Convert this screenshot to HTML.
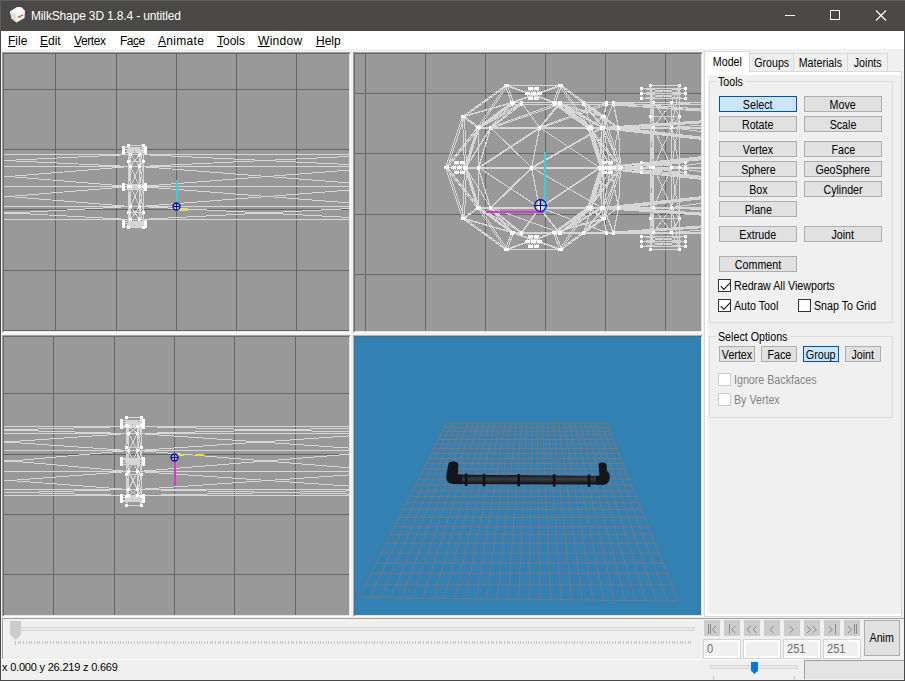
<!DOCTYPE html>
<html lang="en"><head><meta charset="utf-8"><title>MilkShape 3D 1.8.4 - untitled</title>
<style>
html,body{margin:0;padding:0;}
body{width:905px;height:681px;overflow:hidden;background:#f0f0f0;font-family:"Liberation Sans",sans-serif;font-size:11px;color:#000;position:relative;}
#win{position:absolute;left:0;top:0;width:905px;height:681px;background:#f0f0f0;overflow:hidden;}
#win>*, .abs{position:absolute;}
#title{left:0;top:0;width:905px;height:31px;background:#4a4947;}
#title .t{position:absolute;left:31px;top:9px;font-size:12px;letter-spacing:-0.15px;line-height:15px;color:#fff;white-space:nowrap;}
#menu{left:1px;top:31px;width:903px;height:18px;background:#fff;}
#menu span{position:absolute;top:2px;font-size:12px;line-height:16px;white-space:nowrap;}
#menu u{text-decoration:underline;text-underline-offset:1px;text-decoration-thickness:1px;}
.edge{background:#4a4947;}
.vp{box-sizing:border-box;border-top:1px solid #a0a0a0;border-left:1px solid #a0a0a0;border-right:1px solid #fff;border-bottom:1px solid #fff;}
.vpi{border-top:1px solid #696969;border-left:1px solid #696969;border-right:1px solid #e3e3e3;border-bottom:1px solid #e3e3e3;box-sizing:border-box;}
.vps{display:block;}
.b3d{border-top-color:#b0b4b8;border-left-color:#b0b4b8;}
.b3d .vpi{border-top-color:#41708f;border-left-color:#41708f;}
.btn{position:absolute;box-sizing:border-box;border:1px solid #adadad;background:#e1e1e1;text-align:center;font-size:12px;white-space:nowrap;}
.btn.sel{border-color:#005499;background:#cce4f7;}
.btn.prs{border-color:#005499;background:#cce4f7;}
.chk{position:absolute;height:13px;white-space:nowrap;}
.chk .box{position:absolute;left:0;top:0;width:11px;height:11px;border:1px solid #333;background:#fff;}
.chk .cl{position:absolute;left:16px;top:0px;font-size:12px;line-height:14px;}
.chk.dis .box{border-color:#ccc;}
.chk.dis .cl{color:#838383;}
.x{display:inline-block;transform:scaleX(0.89);transform-origin:50% 50%;}
.xl{transform-origin:0 50%;}
.gb{position:absolute;box-sizing:border-box;border:1px solid #dcdcdc;}
.gbl{position:absolute;background:#f0f0f0;font-size:12px;line-height:14px;padding:0 2px;white-space:nowrap;}
.tab{position:absolute;box-sizing:border-box;border:1px solid #d9d9d9;background:#f0f0f0;font-size:12px;text-align:center;white-space:nowrap;}
.tb{position:absolute;width:16px;height:16px;background:#cccccc;}
.tb svg{display:block}
.fld{position:absolute;box-sizing:border-box;width:38px;height:20px;border:1px solid #d2d2d2;background:#f0f0f0;}
.fld span{position:absolute;left:0;top:0;right:0;bottom:0;border:2px solid #fff;font-size:12px;line-height:15px;color:#6d6d6d;padding-left:1px;}
.fld span i{font-style:normal;display:inline-block;transform:scaleX(0.92);transform-origin:0 50%;}
</style></head><body>
<div id="win">
<div id="title"><div class="abs" style="left:0;top:0;width:905px;height:1px;background:#5e5d5b"></div><div class="abs" style="left:0;top:0;width:1px;height:31px;background:#5e5d5b"></div>
<svg class="abs" style="left:9px;top:6px" width="17" height="18" viewBox="0 0 17 18"><path d="M1 5.5 L8.5 1 L12.5 1.5 L16 5 L15.5 12 L7.5 16.5 L2.5 12.5 Z" fill="#f4f4f4"/><path d="M1 5.500 L7 8.500 L7.500 16.500 L2.500 12.500 Z" fill="#dedede"/><path d="M8.500 1 L12.500 1.500 L16 5 L7 8.500 L1 5.500 Z" fill="#fbfbfb"/><path d="M9 11.300 L14 9" stroke="#e03a3a" stroke-width="1.300" fill="none"/></svg>
<div class="t">MilkShape 3D 1.8.4 - untitled</div>
<svg class="abs" style="left:780px;top:5px" width="115" height="22" viewBox="0 0 115 22" ><rect x="5" y="10" width="10" height="1" fill="#fff"/><rect x="50.500" y="5.500" width="9" height="9" fill="none" stroke="#fff" stroke-width="1"/><path d="M96 5.500 L106 15.500 M106 5.500 L96 15.500" stroke="#fff" stroke-width="1.100" fill="none"/></svg>
</div>
<div class="edge" style="left:0;top:31px;width:1px;height:650px"></div>
<div class="edge" style="left:904px;top:31px;width:1px;height:650px"></div>
<div class="edge" style="left:0;top:680px;width:905px;height:1px"></div>
<div id="menu"><span style="left:7px"><u>F</u>ile</span><span style="left:39px"><u>E</u>dit</span><span style="left:73px;letter-spacing:-0.4px"><u>V</u>ertex</span><span style="left:119px;letter-spacing:-0.5px">Fa<u>c</u>e</span><span style="left:157px;letter-spacing:0.3px"><u>A</u>nimate</span><span style="left:216px"><u>T</u>ools</span><span style="left:257px;letter-spacing:0.3px"><u>W</u>indow</span><span style="left:315px"><u>H</u>elp</span></div>
<div class="vp " style="left:2px;top:52px;width:349px;height:281px"><div class="vpi" style="width:347px;height:279px"><svg class="vps" width="345" height="277" viewBox="0 0 345 277" style="background:#999999" shape-rendering="crispEdges"><rect x="51" y="0" width="1" height="277" fill="#666666"/><rect x="112" y="0" width="1" height="277" fill="#666666"/><rect x="172" y="0" width="1" height="277" fill="#666666"/><rect x="232" y="0" width="1" height="277" fill="#666666"/><rect x="292" y="0" width="1" height="277" fill="#666666"/><rect x="0" y="35" width="345" height="1" fill="#666666"/><rect x="0" y="95" width="345" height="1" fill="#666666"/><rect x="0" y="155" width="345" height="1" fill="#666666"/><rect x="0" y="216" width="345" height="1" fill="#666666"/><rect x="0" y="276" width="345" height="1" fill="#666666"/><path d="M-19.5 100.5L126.5 100.5M-19.5 105.5L126.5 112.5M-19.5 107.5L126.5 100.5M-19.5 112.5L126.5 112.5M-19.5 120.5L126.5 132.5M-19.5 124.5L126.5 112.5M-19.5 132.5L126.5 132.5M-19.5 140.5L126.5 152.5M-19.5 144.5L126.5 132.5M-19.5 152.5L126.5 152.5M-19.5 157.5L126.5 165.5M-19.5 160.5L126.5 152.5M-19.5 165.5L126.5 165.5M119.5 93.5L119.5 95.5M119.5 93.5L141.5 93.5M119.5 93.5L141.5 95.5M119.5 95.5L119.5 98.5M119.5 95.5L141.5 93.5M119.5 95.5L141.5 95.5M119.5 95.5L141.5 98.5M119.5 98.5L141.5 95.5M119.5 98.5L141.5 98.5M119.5 130.5L119.5 132.5M119.5 130.5L141.5 130.5M119.5 130.5L141.5 132.5M119.5 132.5L119.5 135.5M119.5 132.5L141.5 130.5M119.5 132.5L141.5 132.5M119.5 132.5L141.5 135.5M119.5 135.5L141.5 132.5M119.5 135.5L141.5 135.5M119.5 167.5L119.5 169.5M119.5 167.5L141.5 167.5M119.5 167.5L141.5 169.5M119.5 169.5L119.5 172.5M119.5 169.5L141.5 167.5M119.5 169.5L141.5 169.5M119.5 169.5L141.5 172.5M119.5 172.5L141.5 169.5M119.5 172.5L141.5 172.5M124.5 91.5L124.5 107.5M124.5 91.5L126.5 100.5M124.5 91.5L126.5 112.5M124.5 91.5L139.5 91.5M124.5 107.5L124.5 132.5M124.5 107.5L126.5 100.5M124.5 107.5L126.5 112.5M124.5 107.5L126.5 132.5M124.5 107.5L139.5 107.5M124.5 132.5L124.5 158.5M124.5 132.5L126.5 112.5M124.5 132.5L126.5 132.5M124.5 132.5L126.5 152.5M124.5 132.5L139.5 132.5M124.5 158.5L124.5 173.5M124.5 158.5L126.5 132.5M124.5 158.5L126.5 152.5M124.5 158.5L126.5 165.5M124.5 158.5L139.5 158.5M124.5 173.5L126.5 152.5M124.5 173.5L126.5 165.5M124.5 173.5L139.5 173.5M126.5 100.5L126.5 112.5M126.5 100.5L135.5 100.5M126.5 100.5L135.5 112.5M126.5 112.5L126.5 132.5M126.5 112.5L135.5 100.5M126.5 112.5L135.5 112.5M126.5 112.5L135.5 132.5M126.5 132.5L126.5 152.5M126.5 132.5L135.5 112.5M126.5 132.5L135.5 132.5M126.5 132.5L135.5 152.5M126.5 152.5L126.5 165.5M126.5 152.5L135.5 132.5M126.5 152.5L135.5 152.5M126.5 152.5L135.5 165.5M126.5 165.5L135.5 152.5M126.5 165.5L135.5 165.5M135.5 100.5L135.5 112.5M135.5 100.5L139.5 91.5M135.5 100.5L139.5 107.5M135.5 100.5L365.5 100.5M135.5 100.5L365.5 111.5M135.5 112.5L135.5 132.5M135.5 112.5L139.5 91.5M135.5 112.5L139.5 107.5M135.5 112.5L139.5 132.5M135.5 112.5L365.5 101.5M135.5 112.5L365.5 112.5M135.5 112.5L365.5 130.5M135.5 132.5L135.5 152.5M135.5 132.5L139.5 107.5M135.5 132.5L139.5 132.5M135.5 132.5L139.5 158.5M135.5 132.5L365.5 114.5M135.5 132.5L365.5 132.5M135.5 132.5L365.5 150.5M135.5 152.5L135.5 165.5M135.5 152.5L139.5 132.5M135.5 152.5L139.5 158.5M135.5 152.5L139.5 173.5M135.5 152.5L365.5 134.5M135.5 152.5L365.5 152.5M135.5 152.5L365.5 164.5M135.5 165.5L139.5 158.5M135.5 165.5L139.5 173.5M135.5 165.5L365.5 153.5M135.5 165.5L365.5 165.5M139.5 91.5L139.5 107.5M139.5 107.5L139.5 132.5M139.5 132.5L139.5 158.5M139.5 158.5L139.5 173.5M141.5 93.5L141.5 95.5M141.5 95.5L141.5 98.5M141.5 130.5L141.5 132.5M141.5 132.5L141.5 135.5M141.5 167.5L141.5 169.5M141.5 169.5L141.5 172.5" fill="none" stroke="#d6d6d6" stroke-width="1" shape-rendering="crispEdges"/><path d="M118 92h3v3h-3zM118 94h3v3h-3zM118 97h3v3h-3zM118 129h3v3h-3zM118 131h3v3h-3zM118 134h3v3h-3zM118 166h3v3h-3zM118 168h3v3h-3zM118 171h3v3h-3zM123 90h3v3h-3zM123 106h3v3h-3zM123 131h3v3h-3zM123 157h3v3h-3zM123 172h3v3h-3zM125 99h3v3h-3zM125 111h3v3h-3zM125 131h3v3h-3zM125 151h3v3h-3zM125 164h3v3h-3zM134 99h3v3h-3zM134 111h3v3h-3zM134 131h3v3h-3zM134 151h3v3h-3zM134 164h3v3h-3zM138 90h3v3h-3zM138 106h3v3h-3zM138 131h3v3h-3zM138 157h3v3h-3zM138 172h3v3h-3zM140 92h3v3h-3zM140 94h3v3h-3zM140 97h3v3h-3zM140 129h3v3h-3zM140 131h3v3h-3zM140 134h3v3h-3zM140 166h3v3h-3zM140 168h3v3h-3zM140 171h3v3h-3z" fill="#ffffff" shape-rendering="crispEdges"/><rect x="172" y="126" width="2" height="30" fill="#35d0d8"/><rect x="174" y="155" width="10" height="2" fill="#e8dc50"/><g shape-rendering="auto"><circle cx="172.5" cy="152.5" r="3.5" fill="rgba(255,255,255,0.3)" stroke="#0a0aa0" stroke-width="1.3"/><path d="M169.0 152.5H176.0M172.5 149.0V156.0" stroke="#0a0aa0" stroke-width="1.1" fill="none"/></g></svg></div></div><div class="vp " style="left:353px;top:52px;width:350px;height:281px"><div class="vpi" style="width:348px;height:279px"><svg class="vps" width="346" height="277" viewBox="0 0 346 277" style="background:#999999" shape-rendering="crispEdges"><rect x="10" y="0" width="1" height="277" fill="#666666"/><rect x="70" y="0" width="1" height="277" fill="#666666"/><rect x="130" y="0" width="1" height="277" fill="#666666"/><rect x="190" y="0" width="1" height="277" fill="#666666"/><rect x="250" y="0" width="1" height="277" fill="#666666"/><rect x="310" y="0" width="1" height="277" fill="#666666"/><rect x="0" y="39" width="346" height="1" fill="#666666"/><rect x="0" y="99" width="346" height="1" fill="#666666"/><rect x="0" y="160" width="346" height="1" fill="#666666"/><rect x="0" y="220" width="346" height="1" fill="#666666"/><path d="M90.5 113.5L107.5 62.5M90.5 113.5L107.5 164.5M90.5 113.5L109.5 113.5M90.5 113.5L122.5 73.5M90.5 113.5L122.5 153.5M92.5 113.5L109.5 62.5M92.5 113.5L109.5 164.5M92.5 113.5L111.5 113.5M92.5 113.5L124.5 73.5M92.5 113.5L124.5 153.5M97.5 113.5L100.5 108.5M97.5 113.5L100.5 118.5M97.5 113.5L103.5 113.5M99.5 113.5L102.5 108.5M99.5 113.5L102.5 118.5M99.5 113.5L105.5 113.5M100.5 108.5L103.5 113.5M100.5 108.5L106.5 108.5M100.5 118.5L103.5 113.5M100.5 118.5L106.5 118.5M102.5 108.5L105.5 113.5M102.5 108.5L108.5 108.5M102.5 118.5L105.5 113.5M102.5 118.5L108.5 118.5M103.5 113.5L106.5 108.5M103.5 113.5L106.5 118.5M103.5 113.5L109.5 113.5M105.5 113.5L108.5 108.5M105.5 113.5L108.5 118.5M105.5 113.5L111.5 113.5M106.5 108.5L109.5 113.5M106.5 118.5L109.5 113.5M107.5 62.5L109.5 113.5M107.5 62.5L122.5 73.5M107.5 62.5L150.5 31.5M107.5 62.5L156.5 48.5M107.5 164.5L109.5 113.5M107.5 164.5L122.5 153.5M107.5 164.5L150.5 195.5M107.5 164.5L156.5 178.5M108.5 108.5L111.5 113.5M108.5 118.5L111.5 113.5M109.5 62.5L111.5 113.5M109.5 62.5L124.5 73.5M109.5 62.5L152.5 31.5M109.5 62.5L158.5 48.5M109.5 113.5L122.5 73.5M109.5 113.5L122.5 153.5M109.5 164.5L111.5 113.5M109.5 164.5L124.5 153.5M109.5 164.5L152.5 195.5M109.5 164.5L158.5 178.5M110.5 113.5L123.5 73.5M110.5 113.5L123.5 113.5M110.5 113.5L123.5 153.5M110.5 113.5L135.5 73.5M110.5 113.5L135.5 153.5M110.5 114.5L123.5 74.5M110.5 114.5L123.5 114.5M110.5 114.5L123.5 154.5M110.5 114.5L135.5 74.5M111.5 113.5L124.5 73.5M111.5 113.5L124.5 153.5M122.5 73.5L150.5 31.5M122.5 73.5L156.5 48.5M122.5 153.5L150.5 195.5M122.5 153.5L156.5 178.5M123.5 73.5L123.5 113.5M123.5 73.5L135.5 73.5M123.5 73.5L157.5 48.5M123.5 73.5L166.5 48.5M123.5 74.5L135.5 74.5M123.5 74.5L157.5 50.5M123.5 74.5L166.5 50.5M123.5 113.5L123.5 153.5M123.5 113.5L135.5 73.5M123.5 113.5L135.5 153.5M123.5 113.5L176.5 113.5M123.5 113.5L184.5 73.5M123.5 113.5L184.5 153.5M123.5 114.5L123.5 154.5M123.5 114.5L135.5 74.5M123.5 114.5L135.5 154.5M123.5 114.5L176.5 114.5M123.5 114.5L184.5 74.5M123.5 153.5L135.5 153.5M123.5 153.5L157.5 178.5M123.5 153.5L166.5 178.5M123.5 154.5L135.5 154.5M123.5 154.5L157.5 179.5M124.5 73.5L152.5 31.5M124.5 73.5L158.5 48.5M124.5 153.5L152.5 195.5M124.5 153.5L158.5 178.5M135.5 73.5L157.5 48.5M135.5 73.5L166.5 48.5M135.5 73.5L176.5 113.5M135.5 73.5L184.5 73.5M135.5 73.5L204.5 48.5M135.5 74.5L166.5 50.5M135.5 74.5L184.5 74.5M135.5 74.5L204.5 50.5M135.5 153.5L157.5 178.5M135.5 153.5L166.5 178.5M135.5 153.5L176.5 113.5M135.5 153.5L184.5 153.5M135.5 153.5L204.5 178.5M135.5 154.5L157.5 179.5M135.5 154.5L166.5 179.5M135.5 154.5L176.5 114.5M135.5 154.5L184.5 154.5M150.5 31.5L156.5 48.5M150.5 31.5L198.5 48.5M150.5 31.5L204.5 31.5M150.5 195.5L156.5 178.5M150.5 195.5L198.5 178.5M150.5 195.5L204.5 195.5M152.5 31.5L158.5 48.5M152.5 31.5L200.5 48.5M152.5 31.5L206.5 31.5M152.5 195.5L158.5 178.5M152.5 195.5L200.5 178.5M152.5 195.5L206.5 195.5M156.5 48.5L198.5 48.5M156.5 48.5L204.5 31.5M156.5 178.5L198.5 178.5M156.5 178.5L204.5 195.5M157.5 48.5L166.5 48.5M157.5 48.5L199.5 48.5M157.5 48.5L205.5 48.5M157.5 50.5L166.5 50.5M157.5 50.5L199.5 50.5M157.5 50.5L205.5 50.5M157.5 178.5L166.5 178.5M157.5 178.5L199.5 178.5M157.5 178.5L205.5 178.5M157.5 179.5L166.5 179.5M157.5 179.5L199.5 179.5M158.5 48.5L200.5 48.5M158.5 48.5L206.5 31.5M158.5 178.5L200.5 178.5M158.5 178.5L206.5 195.5M166.5 48.5L184.5 73.5M166.5 48.5L199.5 48.5M166.5 48.5L204.5 48.5M166.5 48.5L205.5 48.5M166.5 48.5L228.5 48.5M166.5 50.5L204.5 50.5M166.5 50.5L205.5 50.5M166.5 50.5L228.5 50.5M166.5 178.5L184.5 153.5M166.5 178.5L199.5 178.5M166.5 178.5L204.5 178.5M166.5 178.5L205.5 178.5M166.5 178.5L228.5 178.5M166.5 179.5L184.5 154.5M166.5 179.5L199.5 179.5M166.5 179.5L204.5 179.5M166.5 179.5L205.5 179.5M171.5 39.5L174.5 34.5M171.5 39.5L174.5 44.5M171.5 39.5L177.5 39.5M171.5 187.5L174.5 182.5M171.5 187.5L174.5 192.5M171.5 187.5L177.5 187.5M173.5 39.5L176.5 34.5M173.5 39.5L176.5 44.5M173.5 39.5L179.5 39.5M173.5 187.5L176.5 182.5M173.5 187.5L176.5 192.5M173.5 187.5L179.5 187.5M174.5 34.5L177.5 39.5M174.5 34.5L180.5 34.5M174.5 44.5L177.5 39.5M174.5 44.5L180.5 44.5M174.5 182.5L177.5 187.5M174.5 182.5L180.5 182.5M174.5 192.5L177.5 187.5M174.5 192.5L180.5 192.5M176.5 34.5L179.5 39.5M176.5 34.5L182.5 34.5M176.5 44.5L179.5 39.5M176.5 44.5L182.5 44.5M176.5 113.5L184.5 73.5M176.5 113.5L184.5 153.5M176.5 113.5L244.5 113.5M176.5 113.5L246.5 73.5M176.5 113.5L246.5 153.5M176.5 114.5L184.5 74.5M176.5 114.5L184.5 154.5M176.5 114.5L244.5 114.5M176.5 114.5L246.5 74.5M176.5 182.5L179.5 187.5M176.5 182.5L182.5 182.5M176.5 192.5L179.5 187.5M176.5 192.5L182.5 192.5M177.5 39.5L180.5 34.5M177.5 39.5L180.5 44.5M177.5 39.5L183.5 39.5M177.5 187.5L180.5 182.5M177.5 187.5L180.5 192.5M177.5 187.5L183.5 187.5M179.5 39.5L182.5 34.5M179.5 39.5L182.5 44.5M179.5 39.5L185.5 39.5M179.5 187.5L182.5 182.5M179.5 187.5L182.5 192.5M179.5 187.5L185.5 187.5M180.5 34.5L183.5 39.5M180.5 44.5L183.5 39.5M180.5 182.5L183.5 187.5M180.5 192.5L183.5 187.5M182.5 34.5L185.5 39.5M182.5 44.5L185.5 39.5M182.5 182.5L185.5 187.5M182.5 192.5L185.5 187.5M184.5 73.5L204.5 48.5M184.5 73.5L244.5 113.5M184.5 73.5L246.5 73.5M184.5 73.5L251.5 48.5M184.5 74.5L204.5 50.5M184.5 74.5L246.5 74.5M184.5 74.5L251.5 50.5M184.5 153.5L204.5 178.5M184.5 153.5L244.5 113.5M184.5 153.5L246.5 153.5M184.5 153.5L251.5 178.5M184.5 154.5L204.5 179.5M184.5 154.5L244.5 114.5M184.5 154.5L246.5 154.5M198.5 48.5L204.5 31.5M198.5 48.5L232.5 73.5M198.5 48.5L247.5 62.5M198.5 178.5L204.5 195.5M198.5 178.5L232.5 153.5M198.5 178.5L247.5 164.5M199.5 48.5L205.5 48.5M199.5 48.5L233.5 73.5M199.5 48.5L236.5 73.5M199.5 50.5L205.5 50.5M199.5 50.5L233.5 74.5M199.5 50.5L236.5 74.5M199.5 178.5L205.5 178.5M199.5 178.5L233.5 153.5M199.5 178.5L236.5 153.5M199.5 179.5L205.5 179.5M199.5 179.5L233.5 154.5M200.5 48.5L206.5 31.5M200.5 48.5L234.5 73.5M200.5 48.5L249.5 62.5M200.5 178.5L206.5 195.5M200.5 178.5L234.5 153.5M200.5 178.5L249.5 164.5M204.5 31.5L232.5 73.5M204.5 31.5L247.5 62.5M204.5 48.5L205.5 48.5M204.5 48.5L228.5 48.5M204.5 48.5L246.5 73.5M204.5 48.5L251.5 48.5M204.5 48.5L258.5 48.5M204.5 50.5L228.5 50.5M204.5 50.5L251.5 50.5M204.5 50.5L258.5 50.5M204.5 178.5L205.5 178.5M204.5 178.5L228.5 178.5M204.5 178.5L246.5 153.5M204.5 178.5L251.5 178.5M204.5 178.5L258.5 178.5M204.5 179.5L205.5 179.5M204.5 179.5L228.5 179.5M204.5 179.5L246.5 154.5M204.5 179.5L251.5 179.5M204.5 195.5L232.5 153.5M204.5 195.5L247.5 164.5M205.5 48.5L228.5 48.5M205.5 48.5L233.5 73.5M205.5 48.5L236.5 73.5M205.5 48.5L248.5 73.5M205.5 50.5L228.5 50.5M205.5 50.5L236.5 74.5M205.5 50.5L248.5 74.5M205.5 178.5L228.5 178.5M205.5 178.5L233.5 153.5M205.5 178.5L236.5 153.5M205.5 178.5L248.5 153.5M205.5 179.5L228.5 179.5M205.5 179.5L233.5 154.5M205.5 179.5L236.5 154.5M206.5 31.5L234.5 73.5M206.5 31.5L249.5 62.5M206.5 195.5L234.5 153.5M206.5 195.5L249.5 164.5M228.5 48.5L236.5 73.5M228.5 48.5L248.5 73.5M228.5 48.5L251.5 48.5M228.5 48.5L258.5 48.5M228.5 48.5L263.5 73.5M228.5 50.5L248.5 74.5M228.5 50.5L258.5 50.5M228.5 50.5L263.5 74.5M228.5 178.5L236.5 153.5M228.5 178.5L248.5 153.5M228.5 178.5L251.5 178.5M228.5 178.5L258.5 178.5M228.5 178.5L263.5 153.5M228.5 179.5L236.5 154.5M228.5 179.5L248.5 154.5M228.5 179.5L251.5 179.5M228.5 179.5L258.5 179.5M232.5 73.5L245.5 113.5M232.5 73.5L247.5 62.5M232.5 73.5L264.5 113.5M232.5 153.5L245.5 113.5M232.5 153.5L247.5 164.5M232.5 153.5L264.5 113.5M233.5 73.5L236.5 73.5M233.5 73.5L246.5 113.5M233.5 73.5L248.5 113.5M233.5 74.5L236.5 74.5M233.5 74.5L246.5 114.5M233.5 74.5L248.5 114.5M233.5 153.5L236.5 153.5M233.5 153.5L246.5 113.5M233.5 153.5L248.5 113.5M233.5 154.5L236.5 154.5M233.5 154.5L246.5 114.5M234.5 73.5L247.5 113.5M234.5 73.5L249.5 62.5M234.5 73.5L266.5 113.5M234.5 153.5L247.5 113.5M234.5 153.5L249.5 164.5M234.5 153.5L266.5 113.5M236.5 73.5L246.5 113.5M236.5 73.5L248.5 73.5M236.5 73.5L248.5 113.5M236.5 73.5L255.5 113.5M236.5 74.5L248.5 74.5M236.5 74.5L248.5 114.5M236.5 74.5L255.5 114.5M236.5 153.5L246.5 113.5M236.5 153.5L248.5 113.5M236.5 153.5L248.5 153.5M236.5 153.5L255.5 113.5M236.5 154.5L246.5 114.5M236.5 154.5L248.5 114.5M236.5 154.5L248.5 154.5M244.5 113.5L246.5 73.5M244.5 113.5L246.5 153.5M244.5 113.5L298.5 113.5M244.5 113.5L366.5 100.5M244.5 113.5L366.5 113.5M244.5 113.5L366.5 126.5M244.5 114.5L246.5 74.5M244.5 114.5L246.5 154.5M244.5 114.5L366.5 101.5M244.5 114.5L366.5 114.5M244.5 114.5L366.5 127.5M245.5 113.5L247.5 62.5M245.5 113.5L247.5 164.5M245.5 113.5L248.5 108.5M245.5 113.5L248.5 118.5M245.5 113.5L251.5 113.5M245.5 113.5L264.5 113.5M246.5 73.5L251.5 48.5M246.5 73.5L298.5 73.5M246.5 73.5L366.5 65.5M246.5 73.5L366.5 73.5M246.5 73.5L366.5 86.5M246.5 74.5L251.5 50.5M246.5 74.5L366.5 66.5M246.5 74.5L366.5 74.5M246.5 74.5L366.5 87.5M246.5 113.5L248.5 113.5M246.5 114.5L248.5 114.5M246.5 153.5L251.5 178.5M246.5 153.5L298.5 153.5M246.5 153.5L366.5 140.5M246.5 153.5L366.5 153.5M246.5 153.5L366.5 161.5M246.5 154.5L251.5 179.5M246.5 154.5L366.5 141.5M246.5 154.5L366.5 154.5M246.5 154.5L366.5 162.5M247.5 62.5L264.5 113.5M247.5 113.5L249.5 62.5M247.5 113.5L249.5 164.5M247.5 113.5L250.5 108.5M247.5 113.5L250.5 118.5M247.5 113.5L253.5 113.5M247.5 113.5L266.5 113.5M247.5 164.5L264.5 113.5M248.5 73.5L248.5 113.5M248.5 73.5L255.5 113.5M248.5 73.5L258.5 48.5M248.5 73.5L263.5 73.5M248.5 73.5L265.5 113.5M248.5 74.5L255.5 114.5M248.5 74.5L263.5 74.5M248.5 74.5L265.5 114.5M248.5 108.5L251.5 113.5M248.5 108.5L254.5 108.5M248.5 113.5L248.5 153.5M248.5 113.5L255.5 113.5M248.5 114.5L248.5 154.5M248.5 114.5L255.5 114.5M248.5 118.5L251.5 113.5M248.5 118.5L254.5 118.5M248.5 153.5L255.5 113.5M248.5 153.5L258.5 178.5M248.5 153.5L263.5 153.5M248.5 153.5L265.5 113.5M248.5 154.5L255.5 114.5M248.5 154.5L258.5 179.5M248.5 154.5L263.5 154.5M249.5 62.5L266.5 113.5M249.5 164.5L266.5 113.5M250.5 108.5L253.5 113.5M250.5 108.5L256.5 108.5M250.5 118.5L253.5 113.5M250.5 118.5L256.5 118.5M251.5 48.5L258.5 48.5M251.5 48.5L298.5 48.5M251.5 48.5L366.5 48.5M251.5 48.5L366.5 56.5M251.5 50.5L258.5 50.5M251.5 50.5L366.5 50.5M251.5 50.5L366.5 58.5M251.5 113.5L254.5 108.5M251.5 113.5L254.5 118.5M251.5 113.5L257.5 113.5M251.5 178.5L258.5 178.5M251.5 178.5L298.5 178.5M251.5 178.5L366.5 170.5M251.5 178.5L366.5 178.5M251.5 179.5L258.5 179.5M251.5 179.5L366.5 171.5M251.5 179.5L366.5 179.5M253.5 113.5L256.5 108.5M253.5 113.5L256.5 118.5M253.5 113.5L259.5 113.5M254.5 108.5L257.5 113.5M254.5 118.5L257.5 113.5M255.5 113.5L263.5 73.5M255.5 113.5L263.5 153.5M255.5 113.5L265.5 113.5M255.5 114.5L263.5 154.5M255.5 114.5L265.5 114.5M256.5 108.5L259.5 113.5M256.5 118.5L259.5 113.5M258.5 48.5L263.5 73.5M258.5 48.5L298.5 48.5M258.5 48.5L366.5 48.5M258.5 48.5L366.5 56.5M258.5 50.5L263.5 74.5M258.5 50.5L366.5 50.5M258.5 50.5L366.5 57.5M258.5 178.5L263.5 153.5M258.5 178.5L298.5 178.5M258.5 178.5L366.5 170.5M258.5 178.5L366.5 178.5M258.5 179.5L263.5 154.5M258.5 179.5L366.5 172.5M258.5 179.5L366.5 179.5M263.5 73.5L265.5 113.5M263.5 73.5L298.5 73.5M263.5 73.5L366.5 66.5M263.5 73.5L366.5 73.5M263.5 73.5L366.5 85.5M263.5 74.5L265.5 114.5M263.5 74.5L366.5 67.5M263.5 74.5L366.5 74.5M263.5 74.5L366.5 86.5M263.5 153.5L265.5 113.5M263.5 153.5L298.5 153.5M263.5 153.5L366.5 141.5M263.5 153.5L366.5 153.5M263.5 153.5L366.5 160.5M263.5 154.5L265.5 114.5M263.5 154.5L366.5 142.5M263.5 154.5L366.5 154.5M263.5 154.5L366.5 161.5M265.5 113.5L298.5 113.5M265.5 113.5L366.5 102.5M265.5 113.5L366.5 113.5M265.5 113.5L366.5 124.5M265.5 114.5L366.5 103.5M265.5 114.5L366.5 114.5M265.5 114.5L366.5 125.5M286.5 34.5L286.5 39.5M286.5 34.5L330.5 34.5M286.5 34.5L330.5 39.5M286.5 39.5L286.5 44.5M286.5 39.5L330.5 34.5M286.5 39.5L330.5 39.5M286.5 39.5L330.5 44.5M286.5 44.5L330.5 39.5M286.5 44.5L330.5 44.5M286.5 108.5L286.5 113.5M286.5 108.5L330.5 108.5M286.5 108.5L330.5 113.5M286.5 113.5L286.5 118.5M286.5 113.5L330.5 108.5M286.5 113.5L330.5 113.5M286.5 113.5L330.5 118.5M286.5 118.5L330.5 113.5M286.5 118.5L330.5 118.5M286.5 182.5L286.5 187.5M286.5 182.5L330.5 182.5M286.5 182.5L330.5 187.5M286.5 187.5L286.5 192.5M286.5 187.5L330.5 182.5M286.5 187.5L330.5 187.5M286.5 187.5L330.5 192.5M286.5 192.5L330.5 187.5M286.5 192.5L330.5 192.5M295.5 31.5L295.5 62.5M295.5 31.5L298.5 48.5M295.5 31.5L298.5 73.5M295.5 31.5L324.5 31.5M295.5 62.5L295.5 113.5M295.5 62.5L298.5 48.5M295.5 62.5L298.5 73.5M295.5 62.5L298.5 113.5M295.5 62.5L324.5 62.5M295.5 113.5L295.5 164.5M295.5 113.5L298.5 73.5M295.5 113.5L298.5 113.5M295.5 113.5L298.5 153.5M295.5 113.5L324.5 113.5M295.5 164.5L295.5 195.5M295.5 164.5L298.5 113.5M295.5 164.5L298.5 153.5M295.5 164.5L298.5 178.5M295.5 164.5L324.5 164.5M295.5 195.5L298.5 153.5M295.5 195.5L298.5 178.5M295.5 195.5L324.5 195.5M298.5 48.5L298.5 73.5M298.5 48.5L316.5 48.5M298.5 48.5L316.5 73.5M298.5 73.5L298.5 113.5M298.5 73.5L316.5 48.5M298.5 73.5L316.5 73.5M298.5 73.5L316.5 113.5M298.5 113.5L298.5 153.5M298.5 113.5L316.5 73.5M298.5 113.5L316.5 113.5M298.5 113.5L316.5 153.5M298.5 153.5L298.5 178.5M298.5 153.5L316.5 113.5M298.5 153.5L316.5 153.5M298.5 153.5L316.5 178.5M298.5 178.5L316.5 153.5M298.5 178.5L316.5 178.5M316.5 48.5L316.5 73.5M316.5 48.5L324.5 31.5M316.5 48.5L324.5 62.5M316.5 48.5L366.5 48.5M316.5 48.5L366.5 52.5M316.5 73.5L316.5 113.5M316.5 73.5L324.5 31.5M316.5 73.5L324.5 62.5M316.5 73.5L324.5 113.5M316.5 73.5L366.5 69.5M316.5 73.5L366.5 73.5M316.5 73.5L366.5 80.5M316.5 113.5L316.5 153.5M316.5 113.5L324.5 62.5M316.5 113.5L324.5 113.5M316.5 113.5L324.5 164.5M316.5 113.5L366.5 106.5M316.5 113.5L366.5 113.5M316.5 113.5L366.5 120.5M316.5 153.5L316.5 178.5M316.5 153.5L324.5 113.5M316.5 153.5L324.5 164.5M316.5 153.5L324.5 195.5M316.5 153.5L366.5 146.5M316.5 153.5L366.5 153.5M316.5 153.5L366.5 157.5M316.5 178.5L324.5 164.5M316.5 178.5L324.5 195.5M316.5 178.5L366.5 174.5M316.5 178.5L366.5 178.5M324.5 31.5L324.5 62.5M324.5 62.5L324.5 113.5M324.5 113.5L324.5 164.5M324.5 164.5L324.5 195.5M330.5 34.5L330.5 39.5M330.5 39.5L330.5 44.5M330.5 108.5L330.5 113.5M330.5 113.5L330.5 118.5M330.5 182.5L330.5 187.5M330.5 187.5L330.5 192.5" fill="none" stroke="#d6d6d6" stroke-width="1" shape-rendering="crispEdges"/><path d="M89 112h3v3h-3zM91 112h3v3h-3zM96 112h3v3h-3zM98 112h3v3h-3zM99 107h3v3h-3zM99 117h3v3h-3zM101 107h3v3h-3zM101 117h3v3h-3zM102 112h3v3h-3zM104 112h3v3h-3zM105 107h3v3h-3zM105 117h3v3h-3zM106 61h3v3h-3zM106 163h3v3h-3zM107 107h3v3h-3zM107 117h3v3h-3zM108 61h3v3h-3zM108 112h3v3h-3zM108 163h3v3h-3zM109 112h3v3h-3zM109 113h3v3h-3zM110 112h3v3h-3zM121 72h3v3h-3zM121 152h3v3h-3zM122 72h3v3h-3zM122 73h3v3h-3zM122 112h3v3h-3zM122 113h3v3h-3zM122 152h3v3h-3zM122 153h3v3h-3zM123 72h3v3h-3zM123 152h3v3h-3zM134 72h3v3h-3zM134 73h3v3h-3zM134 152h3v3h-3zM134 153h3v3h-3zM149 30h3v3h-3zM149 194h3v3h-3zM151 30h3v3h-3zM151 194h3v3h-3zM155 47h3v3h-3zM155 177h3v3h-3zM156 47h3v3h-3zM156 49h3v3h-3zM156 177h3v3h-3zM156 178h3v3h-3zM157 47h3v3h-3zM157 177h3v3h-3zM165 47h3v3h-3zM165 49h3v3h-3zM165 177h3v3h-3zM165 178h3v3h-3zM170 38h3v3h-3zM170 186h3v3h-3zM172 38h3v3h-3zM172 186h3v3h-3zM173 33h3v3h-3zM173 43h3v3h-3zM173 181h3v3h-3zM173 191h3v3h-3zM175 33h3v3h-3zM175 43h3v3h-3zM175 112h3v3h-3zM175 113h3v3h-3zM175 181h3v3h-3zM175 191h3v3h-3zM176 38h3v3h-3zM176 186h3v3h-3zM178 38h3v3h-3zM178 186h3v3h-3zM179 33h3v3h-3zM179 43h3v3h-3zM179 181h3v3h-3zM179 191h3v3h-3zM181 33h3v3h-3zM181 43h3v3h-3zM181 181h3v3h-3zM181 191h3v3h-3zM182 38h3v3h-3zM182 186h3v3h-3zM183 72h3v3h-3zM183 73h3v3h-3zM183 152h3v3h-3zM183 153h3v3h-3zM184 38h3v3h-3zM184 186h3v3h-3zM197 47h3v3h-3zM197 177h3v3h-3zM198 47h3v3h-3zM198 49h3v3h-3zM198 177h3v3h-3zM198 178h3v3h-3zM199 47h3v3h-3zM199 177h3v3h-3zM203 30h3v3h-3zM203 47h3v3h-3zM203 49h3v3h-3zM203 177h3v3h-3zM203 178h3v3h-3zM203 194h3v3h-3zM204 47h3v3h-3zM204 49h3v3h-3zM204 177h3v3h-3zM204 178h3v3h-3zM205 30h3v3h-3zM205 194h3v3h-3zM227 47h3v3h-3zM227 49h3v3h-3zM227 177h3v3h-3zM227 178h3v3h-3zM231 72h3v3h-3zM231 152h3v3h-3zM232 72h3v3h-3zM232 73h3v3h-3zM232 152h3v3h-3zM232 153h3v3h-3zM233 72h3v3h-3zM233 152h3v3h-3zM235 72h3v3h-3zM235 73h3v3h-3zM235 152h3v3h-3zM235 153h3v3h-3zM243 112h3v3h-3zM243 113h3v3h-3zM244 112h3v3h-3zM245 72h3v3h-3zM245 73h3v3h-3zM245 112h3v3h-3zM245 113h3v3h-3zM245 152h3v3h-3zM245 153h3v3h-3zM246 61h3v3h-3zM246 112h3v3h-3zM246 163h3v3h-3zM247 72h3v3h-3zM247 73h3v3h-3zM247 107h3v3h-3zM247 112h3v3h-3zM247 113h3v3h-3zM247 117h3v3h-3zM247 152h3v3h-3zM247 153h3v3h-3zM248 61h3v3h-3zM248 163h3v3h-3zM249 107h3v3h-3zM249 117h3v3h-3zM250 47h3v3h-3zM250 49h3v3h-3zM250 112h3v3h-3zM250 177h3v3h-3zM250 178h3v3h-3zM252 112h3v3h-3zM253 107h3v3h-3zM253 117h3v3h-3zM254 112h3v3h-3zM254 113h3v3h-3zM255 107h3v3h-3zM255 117h3v3h-3zM256 112h3v3h-3zM257 47h3v3h-3zM257 49h3v3h-3zM257 177h3v3h-3zM257 178h3v3h-3zM258 112h3v3h-3zM262 72h3v3h-3zM262 73h3v3h-3zM262 152h3v3h-3zM262 153h3v3h-3zM263 112h3v3h-3zM264 112h3v3h-3zM264 113h3v3h-3zM265 112h3v3h-3zM285 33h3v3h-3zM285 38h3v3h-3zM285 43h3v3h-3zM285 107h3v3h-3zM285 112h3v3h-3zM285 117h3v3h-3zM285 181h3v3h-3zM285 186h3v3h-3zM285 191h3v3h-3zM294 30h3v3h-3zM294 61h3v3h-3zM294 112h3v3h-3zM294 163h3v3h-3zM294 194h3v3h-3zM297 47h3v3h-3zM297 72h3v3h-3zM297 112h3v3h-3zM297 152h3v3h-3zM297 177h3v3h-3zM315 47h3v3h-3zM315 72h3v3h-3zM315 112h3v3h-3zM315 152h3v3h-3zM315 177h3v3h-3zM323 30h3v3h-3zM323 61h3v3h-3zM323 112h3v3h-3zM323 163h3v3h-3zM323 194h3v3h-3zM329 33h3v3h-3zM329 38h3v3h-3zM329 43h3v3h-3zM329 107h3v3h-3zM329 112h3v3h-3zM329 117h3v3h-3zM329 181h3v3h-3zM329 186h3v3h-3zM329 191h3v3h-3z" fill="#ffffff" shape-rendering="crispEdges"/><rect x="189" y="98" width="2" height="61" fill="#35d0d8"/><rect x="131" y="157" width="58" height="2" fill="#d838d0"/><g shape-rendering="auto"><circle cx="185.5" cy="151.5" r="5.8" fill="rgba(255,255,255,0.3)" stroke="#0a0aa0" stroke-width="1.3"/><path d="M179.7 151.5H191.3M185.5 145.7V157.3" stroke="#0a0aa0" stroke-width="1.1" fill="none"/></g></svg></div></div><div class="vp " style="left:2px;top:335px;width:349px;height:282px"><div class="vpi" style="width:347px;height:280px"><svg class="vps" width="345" height="278" viewBox="0 0 345 278" style="background:#999999" shape-rendering="crispEdges"><rect x="49" y="0" width="1" height="278" fill="#666666"/><rect x="110" y="0" width="1" height="278" fill="#666666"/><rect x="170" y="0" width="1" height="278" fill="#666666"/><rect x="230" y="0" width="1" height="278" fill="#666666"/><rect x="291" y="0" width="1" height="278" fill="#666666"/><rect x="0" y="56" width="345" height="1" fill="#666666"/><rect x="0" y="117" width="345" height="1" fill="#666666"/><rect x="0" y="177" width="345" height="1" fill="#666666"/><rect x="0" y="237" width="345" height="1" fill="#666666"/><path d="M-19.5 89.5L124.5 89.5M-19.5 92.5L124.5 96.5M-19.5 93.5L124.5 89.5M-19.5 96.5L124.5 96.5M-19.5 103.5L124.5 113.5M-19.5 106.5L124.5 96.5M-19.5 113.5L124.5 113.5M-19.5 121.5L124.5 134.5M-19.5 126.5L124.5 113.5M-19.5 134.5L124.5 134.5M-19.5 141.5L124.5 152.5M-19.5 145.5L124.5 134.5M-19.5 152.5L124.5 152.5M-19.5 154.5L124.5 158.5M-19.5 156.5L124.5 152.5M-19.5 158.5L124.5 158.5M117.5 83.5L117.5 85.5M117.5 83.5L117.5 86.5M117.5 83.5L139.5 83.5M117.5 83.5L139.5 85.5M117.5 85.5L117.5 86.5M117.5 85.5L117.5 88.5M117.5 85.5L139.5 83.5M117.5 85.5L139.5 85.5M117.5 85.5L139.5 88.5M117.5 86.5L117.5 88.5M117.5 86.5L117.5 90.5M117.5 88.5L117.5 90.5M117.5 88.5L139.5 85.5M117.5 88.5L139.5 88.5M117.5 88.5L139.5 90.5M117.5 90.5L139.5 88.5M117.5 90.5L139.5 90.5M117.5 121.5L117.5 122.5M117.5 121.5L117.5 124.5M117.5 121.5L139.5 121.5M117.5 121.5L139.5 122.5M117.5 122.5L117.5 124.5M117.5 122.5L117.5 125.5M117.5 122.5L139.5 121.5M117.5 122.5L139.5 122.5M117.5 122.5L139.5 125.5M117.5 124.5L117.5 125.5M117.5 124.5L117.5 127.5M117.5 125.5L117.5 127.5M117.5 125.5L139.5 122.5M117.5 125.5L139.5 125.5M117.5 125.5L139.5 127.5M117.5 127.5L139.5 125.5M117.5 127.5L139.5 127.5M117.5 158.5L117.5 160.5M117.5 158.5L117.5 161.5M117.5 158.5L139.5 158.5M117.5 158.5L139.5 160.5M117.5 160.5L117.5 161.5M117.5 160.5L117.5 163.5M117.5 160.5L139.5 158.5M117.5 160.5L139.5 160.5M117.5 160.5L139.5 163.5M117.5 161.5L117.5 163.5M117.5 161.5L117.5 164.5M117.5 163.5L117.5 164.5M117.5 163.5L139.5 160.5M117.5 163.5L139.5 163.5M117.5 163.5L139.5 164.5M117.5 164.5L139.5 163.5M117.5 164.5L139.5 164.5M122.5 80.5L122.5 88.5M122.5 80.5L124.5 89.5M122.5 80.5L124.5 96.5M122.5 80.5L137.5 80.5M122.5 88.5L122.5 110.5M122.5 88.5L124.5 89.5M122.5 88.5L124.5 96.5M122.5 88.5L124.5 113.5M122.5 88.5L137.5 88.5M122.5 110.5L122.5 137.5M122.5 110.5L124.5 96.5M122.5 110.5L124.5 113.5M122.5 110.5L124.5 134.5M122.5 110.5L137.5 110.5M122.5 137.5L122.5 159.5M122.5 137.5L124.5 113.5M122.5 137.5L124.5 134.5M122.5 137.5L124.5 152.5M122.5 137.5L137.5 137.5M122.5 159.5L122.5 168.5M122.5 159.5L124.5 134.5M122.5 159.5L124.5 152.5M122.5 159.5L124.5 158.5M122.5 159.5L137.5 159.5M122.5 168.5L124.5 152.5M122.5 168.5L124.5 158.5M122.5 168.5L137.5 168.5M124.5 89.5L124.5 96.5M124.5 89.5L133.5 89.5M124.5 89.5L133.5 96.5M124.5 96.5L124.5 113.5M124.5 96.5L133.5 89.5M124.5 96.5L133.5 96.5M124.5 96.5L133.5 113.5M124.5 113.5L124.5 134.5M124.5 113.5L133.5 96.5M124.5 113.5L133.5 113.5M124.5 113.5L133.5 134.5M124.5 134.5L124.5 152.5M124.5 134.5L133.5 113.5M124.5 134.5L133.5 134.5M124.5 134.5L133.5 152.5M124.5 152.5L124.5 158.5M124.5 152.5L133.5 134.5M124.5 152.5L133.5 152.5M124.5 152.5L133.5 158.5M124.5 158.5L133.5 152.5M124.5 158.5L133.5 158.5M133.5 89.5L133.5 96.5M133.5 89.5L137.5 80.5M133.5 89.5L137.5 88.5M133.5 89.5L365.5 89.5M133.5 89.5L365.5 95.5M133.5 96.5L133.5 113.5M133.5 96.5L137.5 80.5M133.5 96.5L137.5 88.5M133.5 96.5L137.5 110.5M133.5 96.5L365.5 90.5M133.5 96.5L365.5 96.5M133.5 96.5L365.5 112.5M133.5 113.5L133.5 134.5M133.5 113.5L137.5 88.5M133.5 113.5L137.5 110.5M133.5 113.5L137.5 137.5M133.5 113.5L365.5 97.5M133.5 113.5L365.5 113.5M133.5 113.5L365.5 132.5M133.5 134.5L133.5 152.5M133.5 134.5L137.5 110.5M133.5 134.5L137.5 137.5M133.5 134.5L137.5 159.5M133.5 134.5L365.5 115.5M133.5 134.5L365.5 134.5M133.5 134.5L365.5 150.5M133.5 152.5L133.5 158.5M133.5 152.5L137.5 137.5M133.5 152.5L137.5 159.5M133.5 152.5L137.5 168.5M133.5 152.5L365.5 136.5M133.5 152.5L365.5 152.5M133.5 152.5L365.5 157.5M133.5 158.5L137.5 159.5M133.5 158.5L137.5 168.5M133.5 158.5L365.5 153.5M133.5 158.5L365.5 158.5M137.5 80.5L137.5 88.5M137.5 88.5L137.5 110.5M137.5 110.5L137.5 137.5M137.5 137.5L137.5 159.5M137.5 159.5L137.5 168.5M139.5 83.5L139.5 85.5M139.5 83.5L139.5 86.5M139.5 85.5L139.5 86.5M139.5 85.5L139.5 88.5M139.5 86.5L139.5 88.5M139.5 86.5L139.5 90.5M139.5 88.5L139.5 90.5M139.5 121.5L139.5 122.5M139.5 121.5L139.5 124.5M139.5 122.5L139.5 124.5M139.5 122.5L139.5 125.5M139.5 124.5L139.5 125.5M139.5 124.5L139.5 127.5M139.5 125.5L139.5 127.5M139.5 158.5L139.5 160.5M139.5 158.5L139.5 161.5M139.5 160.5L139.5 161.5M139.5 160.5L139.5 163.5M139.5 161.5L139.5 163.5M139.5 161.5L139.5 164.5M139.5 163.5L139.5 164.5" fill="none" stroke="#d6d6d6" stroke-width="1" shape-rendering="crispEdges"/><path d="M116 82h3v3h-3zM116 84h3v3h-3zM116 85h3v3h-3zM116 87h3v3h-3zM116 89h3v3h-3zM116 120h3v3h-3zM116 121h3v3h-3zM116 123h3v3h-3zM116 124h3v3h-3zM116 126h3v3h-3zM116 157h3v3h-3zM116 159h3v3h-3zM116 160h3v3h-3zM116 162h3v3h-3zM116 163h3v3h-3zM121 79h3v3h-3zM121 87h3v3h-3zM121 109h3v3h-3zM121 136h3v3h-3zM121 158h3v3h-3zM121 167h3v3h-3zM123 88h3v3h-3zM123 95h3v3h-3zM123 112h3v3h-3zM123 133h3v3h-3zM123 151h3v3h-3zM123 157h3v3h-3zM132 88h3v3h-3zM132 95h3v3h-3zM132 112h3v3h-3zM132 133h3v3h-3zM132 151h3v3h-3zM132 157h3v3h-3zM136 79h3v3h-3zM136 87h3v3h-3zM136 109h3v3h-3zM136 136h3v3h-3zM136 158h3v3h-3zM136 167h3v3h-3zM138 82h3v3h-3zM138 84h3v3h-3zM138 85h3v3h-3zM138 87h3v3h-3zM138 89h3v3h-3zM138 120h3v3h-3zM138 121h3v3h-3zM138 123h3v3h-3zM138 124h3v3h-3zM138 126h3v3h-3zM138 157h3v3h-3zM138 159h3v3h-3zM138 160h3v3h-3zM138 162h3v3h-3zM138 163h3v3h-3z" fill="#ffffff" shape-rendering="crispEdges"/><rect x="170" y="123" width="2" height="26" fill="#d838d0"/><rect x="173" y="117" width="7" height="2" fill="#e8dc50"/><rect x="191" y="117" width="9" height="2" fill="#e8dc50"/><g shape-rendering="auto"><circle cx="170.5" cy="120.5" r="3.5" fill="rgba(255,255,255,0.3)" stroke="#0a0aa0" stroke-width="1.3"/><path d="M167.0 120.5H174.0M170.5 117.0V124.0" stroke="#0a0aa0" stroke-width="1.1" fill="none"/></g></svg></div></div><div class="vp b3d" style="left:353px;top:335px;width:350px;height:282px"><div class="vpi" style="width:348px;height:280px"><svg class="vps" width="346" height="278" viewBox="0 0 346 278" style="background:#3380b3" shape-rendering="crispEdges"><path d="M91.3 86.0L251.9 86.0M89.2 90.3L253.7 90.3M87.2 94.3L255.3 94.3M85.2 98.2L256.9 98.2M83.0 102.6L258.7 102.6M80.8 107.1L260.5 107.1M78.4 111.8L262.4 111.8M76.1 116.5L264.3 116.5M73.6 121.5L266.4 121.5M71.1 126.4L268.4 126.4M68.7 131.4L270.4 131.4M66.0 136.7L272.5 136.7M63.4 142.0L274.7 142.0M60.5 147.7L277.0 147.7M57.5 153.7L279.5 153.7M54.6 159.5L281.8 159.5M51.4 165.9L284.4 165.9M48.1 172.6L287.2 172.6M44.1 180.6L290.4 180.6M39.7 189.4L294.0 189.4M35.8 197.3L297.2 197.3M31.3 206.2L300.8 206.2M26.3 216.2L304.9 216.2M21.4 226.1L309.0 226.1M16.1 236.7L313.3 236.7M10.5 248.0L317.9 248.0M4.2 260.5L323.0 264.0M91.5 86.0L4.2 260.5M96.8 86.0L14.9 260.6M102.2 86.0L25.5 260.7M107.5 86.0L36.1 260.9M112.9 86.0L46.7 261.0M118.2 86.0L57.4 261.1M123.5 86.0L68.0 261.2M128.9 86.0L78.6 261.3M134.2 86.0L89.2 261.4M139.6 86.0L99.9 261.6M144.9 86.0L110.5 261.7M150.2 86.0L121.1 261.8M155.6 86.0L131.7 261.9M160.9 86.0L142.4 262.0M166.3 86.0L153.0 262.1M171.6 86.0L163.6 262.2M176.9 86.0L174.2 262.4M182.3 86.0L184.8 262.5M187.6 86.0L195.5 262.6M193.0 86.0L206.1 262.7M198.3 86.0L216.7 262.8M203.6 86.0L227.3 262.9M209.0 86.0L238.0 263.1M214.3 86.0L248.6 263.2M219.7 86.0L259.2 263.3M225.0 86.0L269.8 263.4M230.3 86.0L280.5 263.5M235.7 86.0L291.1 263.6M241.0 86.0L301.7 263.8M246.4 86.0L312.3 263.9M251.7 86.0L323.0 264.0" fill="none" stroke="#84767a" stroke-width="1" shape-rendering="auto" opacity="0.8"/><defs><linearGradient id="pg" x1="0" y1="0" x2="0" y2="1"><stop offset="0" stop-color="#0e1014"/><stop offset="0.45" stop-color="#3a3e45"/><stop offset="1" stop-color="#0b0c10"/></linearGradient></defs><g shape-rendering="auto"><path d="M97 137.60000000000002 L249 139 L249 147.60000000000002 L97 147 Z" fill="url(#pg)"/><path d="M93.5 126.5 Q94 124.30000000000001 98.5 124.5 Q103.60000000000002 124.80000000000001 103.39999999999998 128 L102.80000000000001 137.60000000000002 L107 137.8 L107 147.2 L98 147 Q90.60000000000002 146 91.19999999999999 139 Z" fill="#14161b"/><path d="M243.60000000000002 128 Q243.39999999999998 125.39999999999998 247.5 125.5 Q251.79999999999995 125.80000000000001 251.60000000000002 129 L252 134 Q255.39999999999998 136 254.79999999999995 141 Q254 148.2 247 147.8 L241 147.60000000000002 L241 139 L244.39999999999998 138.39999999999998 Z" fill="#14161b"/><rect x="109.8" y="136.5" width="2.6" height="12.4" fill="#101216"/><rect x="127.7" y="136.7" width="2.6" height="12.4" fill="#101216"/><rect x="162.4" y="136.9" width="2.6" height="12.4" fill="#101216"/><rect x="197.8" y="137.2" width="2.6" height="12.4" fill="#101216"/><rect x="232.7" y="137.5" width="2.6" height="12.4" fill="#101216"/><rect x="168.5" y="143" width="2" height="1.5" fill="#2018a0"/></g></svg></div></div>
<!-- right panel -->
<div class="abs" style="left:704px;top:71px;width:198px;height:546px;box-sizing:border-box;border:1px solid #d9d9d9;background:#fff"></div>
<div class="abs" style="left:708px;top:75px;width:193px;height:539px;background:#f0f0f0"></div>
<div class="tab" style="left:704px;top:51px;width:46px;height:22px;background:#fff;border-bottom:none;line-height:21px"><span class="x">Model</span></div>
<div class="tab" style="left:749px;top:53px;width:45px;height:19px;line-height:18px"><span class="x">Groups</span></div>
<div class="tab" style="left:793px;top:53px;width:55px;height:19px;line-height:18px"><span class="x">Materials</span></div>
<div class="tab" style="left:847px;top:53px;width:41px;height:19px;line-height:18px"><span class="x">Joints</span></div>
<div class="gb" style="left:709px;top:81px;width:184px;height:242px"></div><div class="gbl" style="left:716px;top:75px;width:26px"><span class="x xl">Tools</span></div>
<div class="gb" style="left:709px;top:336px;width:184px;height:82px"></div><div class="gbl" style="left:716px;top:330px;width:70px"><span class="x xl">Select Options</span></div>
<div class="btn sel" style="left:719px;top:96px;width:78px;height:16px;line-height:16px"><span class="x">Select</span></div><div class="btn " style="left:804px;top:96px;width:78px;height:16px;line-height:16px"><span class="x">Move</span></div><div class="btn " style="left:719px;top:116px;width:78px;height:16px;line-height:16px"><span class="x">Rotate</span></div><div class="btn " style="left:804px;top:116px;width:78px;height:16px;line-height:16px"><span class="x">Scale</span></div><div class="btn " style="left:719px;top:141px;width:78px;height:16px;line-height:16px"><span class="x">Vertex</span></div><div class="btn " style="left:804px;top:141px;width:78px;height:16px;line-height:16px"><span class="x">Face</span></div><div class="btn " style="left:719px;top:161px;width:78px;height:16px;line-height:16px"><span class="x">Sphere</span></div><div class="btn " style="left:804px;top:161px;width:78px;height:16px;line-height:16px"><span class="x">GeoSphere</span></div><div class="btn " style="left:719px;top:181px;width:78px;height:16px;line-height:16px"><span class="x">Box</span></div><div class="btn " style="left:804px;top:181px;width:78px;height:16px;line-height:16px"><span class="x">Cylinder</span></div><div class="btn " style="left:719px;top:201px;width:78px;height:16px;line-height:16px"><span class="x">Plane</span></div><div class="btn " style="left:719px;top:226px;width:78px;height:16px;line-height:16px"><span class="x">Extrude</span></div><div class="btn " style="left:804px;top:226px;width:78px;height:16px;line-height:16px"><span class="x">Joint</span></div><div class="btn " style="left:719px;top:256px;width:78px;height:16px;line-height:16px"><span class="x">Comment</span></div><div class="btn " style="left:719px;top:346px;width:36px;height:16px;line-height:16px"><span class="x">Vertex</span></div><div class="btn " style="left:761px;top:346px;width:36px;height:16px;line-height:16px"><span class="x">Face</span></div><div class="btn prs" style="left:803px;top:346px;width:36px;height:16px;line-height:16px"><span class="x">Group</span></div><div class="btn " style="left:845px;top:346px;width:36px;height:16px;line-height:16px"><span class="x">Joint</span></div><div class="chk" style="left:718px;top:279px"><span class="box"><svg width="13" height="13" viewBox="0 0 13 13" style="position:absolute;left:0;top:0"><path d="M1.8 6.2 L4.8 9.4 L11.3 2.6" fill="none" stroke="#1a1a1a" stroke-width="1.15"/></svg></span><span class="cl x xl">Redraw All Viewports</span></div><div class="chk" style="left:718px;top:299px"><span class="box"><svg width="13" height="13" viewBox="0 0 13 13" style="position:absolute;left:0;top:0"><path d="M1.8 6.2 L4.8 9.4 L11.3 2.6" fill="none" stroke="#1a1a1a" stroke-width="1.15"/></svg></span><span class="cl x xl">Auto Tool</span></div><div class="chk" style="left:798px;top:299px"><span class="box"></span><span class="cl x xl">Snap To Grid</span></div><div class="chk dis" style="left:718px;top:373px"><span class="box"></span><span class="cl x xl">Ignore Backfaces</span></div><div class="chk dis" style="left:718px;top:393px"><span class="box"></span><span class="cl x xl">By Vertex</span></div>
<!-- bottom -->
<div class="abs" style="left:2px;top:618px;width:902px;height:41px;box-sizing:border-box;border-top:1px solid #a0a0a0;border-left:1px solid #a0a0a0;"></div>
<div class="abs" style="left:20px;top:627px;width:675px;height:4px;box-sizing:border-box;border:1px solid #d6d6d6;background:#e7e7e7"></div>
<svg class="abs" style="left:10px;top:621px" width="11" height="19" viewBox="0 0 11 19"><path d="M0 0 H11 V13.500 L5.500 19 L0 13.500 Z" fill="#cccccc"/></svg>
<svg class="abs" style="left:0;top:641px" width="700" height="5" shape-rendering="crispEdges"><rect x="15" y="0" width="1" height="4" fill="#c4c4c4"/><rect x="18" y="0" width="1" height="3" fill="#c4c4c4"/><rect x="20" y="0" width="1" height="3" fill="#c4c4c4"/><rect x="23" y="0" width="1" height="3" fill="#c4c4c4"/><rect x="26" y="0" width="1" height="3" fill="#c4c4c4"/><rect x="29" y="0" width="1" height="3" fill="#c4c4c4"/><rect x="31" y="0" width="1" height="3" fill="#c4c4c4"/><rect x="34" y="0" width="1" height="3" fill="#c4c4c4"/><rect x="37" y="0" width="1" height="3" fill="#c4c4c4"/><rect x="39" y="0" width="1" height="3" fill="#c4c4c4"/><rect x="42" y="0" width="1" height="3" fill="#c4c4c4"/><rect x="45" y="0" width="1" height="3" fill="#c4c4c4"/><rect x="47" y="0" width="1" height="3" fill="#c4c4c4"/><rect x="50" y="0" width="1" height="3" fill="#c4c4c4"/><rect x="53" y="0" width="1" height="3" fill="#c4c4c4"/><rect x="56" y="0" width="1" height="3" fill="#c4c4c4"/><rect x="58" y="0" width="1" height="3" fill="#c4c4c4"/><rect x="61" y="0" width="1" height="3" fill="#c4c4c4"/><rect x="64" y="0" width="1" height="3" fill="#c4c4c4"/><rect x="66" y="0" width="1" height="3" fill="#c4c4c4"/><rect x="69" y="0" width="1" height="3" fill="#c4c4c4"/><rect x="72" y="0" width="1" height="3" fill="#c4c4c4"/><rect x="74" y="0" width="1" height="3" fill="#c4c4c4"/><rect x="77" y="0" width="1" height="3" fill="#c4c4c4"/><rect x="80" y="0" width="1" height="3" fill="#c4c4c4"/><rect x="83" y="0" width="1" height="3" fill="#c4c4c4"/><rect x="85" y="0" width="1" height="3" fill="#c4c4c4"/><rect x="88" y="0" width="1" height="3" fill="#c4c4c4"/><rect x="91" y="0" width="1" height="3" fill="#c4c4c4"/><rect x="93" y="0" width="1" height="3" fill="#c4c4c4"/><rect x="96" y="0" width="1" height="3" fill="#c4c4c4"/><rect x="99" y="0" width="1" height="3" fill="#c4c4c4"/><rect x="101" y="0" width="1" height="3" fill="#c4c4c4"/><rect x="104" y="0" width="1" height="3" fill="#c4c4c4"/><rect x="107" y="0" width="1" height="3" fill="#c4c4c4"/><rect x="110" y="0" width="1" height="3" fill="#c4c4c4"/><rect x="112" y="0" width="1" height="3" fill="#c4c4c4"/><rect x="115" y="0" width="1" height="3" fill="#c4c4c4"/><rect x="118" y="0" width="1" height="3" fill="#c4c4c4"/><rect x="120" y="0" width="1" height="3" fill="#c4c4c4"/><rect x="123" y="0" width="1" height="3" fill="#c4c4c4"/><rect x="126" y="0" width="1" height="3" fill="#c4c4c4"/><rect x="128" y="0" width="1" height="3" fill="#c4c4c4"/><rect x="131" y="0" width="1" height="3" fill="#c4c4c4"/><rect x="134" y="0" width="1" height="3" fill="#c4c4c4"/><rect x="137" y="0" width="1" height="3" fill="#c4c4c4"/><rect x="139" y="0" width="1" height="3" fill="#c4c4c4"/><rect x="142" y="0" width="1" height="3" fill="#c4c4c4"/><rect x="145" y="0" width="1" height="3" fill="#c4c4c4"/><rect x="147" y="0" width="1" height="3" fill="#c4c4c4"/><rect x="150" y="0" width="1" height="3" fill="#c4c4c4"/><rect x="153" y="0" width="1" height="3" fill="#c4c4c4"/><rect x="156" y="0" width="1" height="3" fill="#c4c4c4"/><rect x="158" y="0" width="1" height="3" fill="#c4c4c4"/><rect x="161" y="0" width="1" height="3" fill="#c4c4c4"/><rect x="164" y="0" width="1" height="3" fill="#c4c4c4"/><rect x="166" y="0" width="1" height="3" fill="#c4c4c4"/><rect x="169" y="0" width="1" height="3" fill="#c4c4c4"/><rect x="172" y="0" width="1" height="3" fill="#c4c4c4"/><rect x="174" y="0" width="1" height="3" fill="#c4c4c4"/><rect x="177" y="0" width="1" height="3" fill="#c4c4c4"/><rect x="180" y="0" width="1" height="3" fill="#c4c4c4"/><rect x="183" y="0" width="1" height="3" fill="#c4c4c4"/><rect x="185" y="0" width="1" height="3" fill="#c4c4c4"/><rect x="188" y="0" width="1" height="3" fill="#c4c4c4"/><rect x="191" y="0" width="1" height="3" fill="#c4c4c4"/><rect x="193" y="0" width="1" height="3" fill="#c4c4c4"/><rect x="196" y="0" width="1" height="3" fill="#c4c4c4"/><rect x="199" y="0" width="1" height="3" fill="#c4c4c4"/><rect x="201" y="0" width="1" height="3" fill="#c4c4c4"/><rect x="204" y="0" width="1" height="3" fill="#c4c4c4"/><rect x="207" y="0" width="1" height="3" fill="#c4c4c4"/><rect x="210" y="0" width="1" height="3" fill="#c4c4c4"/><rect x="212" y="0" width="1" height="3" fill="#c4c4c4"/><rect x="215" y="0" width="1" height="3" fill="#c4c4c4"/><rect x="218" y="0" width="1" height="3" fill="#c4c4c4"/><rect x="220" y="0" width="1" height="3" fill="#c4c4c4"/><rect x="223" y="0" width="1" height="3" fill="#c4c4c4"/><rect x="226" y="0" width="1" height="3" fill="#c4c4c4"/><rect x="228" y="0" width="1" height="3" fill="#c4c4c4"/><rect x="231" y="0" width="1" height="3" fill="#c4c4c4"/><rect x="234" y="0" width="1" height="3" fill="#c4c4c4"/><rect x="237" y="0" width="1" height="3" fill="#c4c4c4"/><rect x="239" y="0" width="1" height="3" fill="#c4c4c4"/><rect x="242" y="0" width="1" height="3" fill="#c4c4c4"/><rect x="245" y="0" width="1" height="3" fill="#c4c4c4"/><rect x="247" y="0" width="1" height="3" fill="#c4c4c4"/><rect x="250" y="0" width="1" height="3" fill="#c4c4c4"/><rect x="253" y="0" width="1" height="3" fill="#c4c4c4"/><rect x="255" y="0" width="1" height="3" fill="#c4c4c4"/><rect x="258" y="0" width="1" height="3" fill="#c4c4c4"/><rect x="261" y="0" width="1" height="3" fill="#c4c4c4"/><rect x="264" y="0" width="1" height="3" fill="#c4c4c4"/><rect x="266" y="0" width="1" height="3" fill="#c4c4c4"/><rect x="269" y="0" width="1" height="3" fill="#c4c4c4"/><rect x="272" y="0" width="1" height="3" fill="#c4c4c4"/><rect x="274" y="0" width="1" height="3" fill="#c4c4c4"/><rect x="277" y="0" width="1" height="3" fill="#c4c4c4"/><rect x="280" y="0" width="1" height="3" fill="#c4c4c4"/><rect x="282" y="0" width="1" height="3" fill="#c4c4c4"/><rect x="285" y="0" width="1" height="3" fill="#c4c4c4"/><rect x="288" y="0" width="1" height="3" fill="#c4c4c4"/><rect x="291" y="0" width="1" height="3" fill="#c4c4c4"/><rect x="293" y="0" width="1" height="3" fill="#c4c4c4"/><rect x="296" y="0" width="1" height="3" fill="#c4c4c4"/><rect x="299" y="0" width="1" height="3" fill="#c4c4c4"/><rect x="301" y="0" width="1" height="3" fill="#c4c4c4"/><rect x="304" y="0" width="1" height="3" fill="#c4c4c4"/><rect x="307" y="0" width="1" height="3" fill="#c4c4c4"/><rect x="310" y="0" width="1" height="3" fill="#c4c4c4"/><rect x="312" y="0" width="1" height="3" fill="#c4c4c4"/><rect x="315" y="0" width="1" height="3" fill="#c4c4c4"/><rect x="318" y="0" width="1" height="3" fill="#c4c4c4"/><rect x="320" y="0" width="1" height="3" fill="#c4c4c4"/><rect x="323" y="0" width="1" height="3" fill="#c4c4c4"/><rect x="326" y="0" width="1" height="3" fill="#c4c4c4"/><rect x="328" y="0" width="1" height="3" fill="#c4c4c4"/><rect x="331" y="0" width="1" height="3" fill="#c4c4c4"/><rect x="334" y="0" width="1" height="3" fill="#c4c4c4"/><rect x="337" y="0" width="1" height="3" fill="#c4c4c4"/><rect x="339" y="0" width="1" height="3" fill="#c4c4c4"/><rect x="342" y="0" width="1" height="3" fill="#c4c4c4"/><rect x="345" y="0" width="1" height="3" fill="#c4c4c4"/><rect x="347" y="0" width="1" height="3" fill="#c4c4c4"/><rect x="350" y="0" width="1" height="3" fill="#c4c4c4"/><rect x="353" y="0" width="1" height="3" fill="#c4c4c4"/><rect x="355" y="0" width="1" height="3" fill="#c4c4c4"/><rect x="358" y="0" width="1" height="3" fill="#c4c4c4"/><rect x="361" y="0" width="1" height="3" fill="#c4c4c4"/><rect x="364" y="0" width="1" height="3" fill="#c4c4c4"/><rect x="366" y="0" width="1" height="3" fill="#c4c4c4"/><rect x="369" y="0" width="1" height="3" fill="#c4c4c4"/><rect x="372" y="0" width="1" height="3" fill="#c4c4c4"/><rect x="374" y="0" width="1" height="3" fill="#c4c4c4"/><rect x="377" y="0" width="1" height="3" fill="#c4c4c4"/><rect x="380" y="0" width="1" height="3" fill="#c4c4c4"/><rect x="382" y="0" width="1" height="3" fill="#c4c4c4"/><rect x="385" y="0" width="1" height="3" fill="#c4c4c4"/><rect x="388" y="0" width="1" height="3" fill="#c4c4c4"/><rect x="391" y="0" width="1" height="3" fill="#c4c4c4"/><rect x="393" y="0" width="1" height="3" fill="#c4c4c4"/><rect x="396" y="0" width="1" height="3" fill="#c4c4c4"/><rect x="399" y="0" width="1" height="3" fill="#c4c4c4"/><rect x="401" y="0" width="1" height="3" fill="#c4c4c4"/><rect x="404" y="0" width="1" height="3" fill="#c4c4c4"/><rect x="407" y="0" width="1" height="3" fill="#c4c4c4"/><rect x="409" y="0" width="1" height="3" fill="#c4c4c4"/><rect x="412" y="0" width="1" height="3" fill="#c4c4c4"/><rect x="415" y="0" width="1" height="3" fill="#c4c4c4"/><rect x="418" y="0" width="1" height="3" fill="#c4c4c4"/><rect x="420" y="0" width="1" height="3" fill="#c4c4c4"/><rect x="423" y="0" width="1" height="3" fill="#c4c4c4"/><rect x="426" y="0" width="1" height="3" fill="#c4c4c4"/><rect x="428" y="0" width="1" height="3" fill="#c4c4c4"/><rect x="431" y="0" width="1" height="3" fill="#c4c4c4"/><rect x="434" y="0" width="1" height="3" fill="#c4c4c4"/><rect x="437" y="0" width="1" height="3" fill="#c4c4c4"/><rect x="439" y="0" width="1" height="3" fill="#c4c4c4"/><rect x="442" y="0" width="1" height="3" fill="#c4c4c4"/><rect x="445" y="0" width="1" height="3" fill="#c4c4c4"/><rect x="447" y="0" width="1" height="3" fill="#c4c4c4"/><rect x="450" y="0" width="1" height="3" fill="#c4c4c4"/><rect x="453" y="0" width="1" height="3" fill="#c4c4c4"/><rect x="455" y="0" width="1" height="3" fill="#c4c4c4"/><rect x="458" y="0" width="1" height="3" fill="#c4c4c4"/><rect x="461" y="0" width="1" height="3" fill="#c4c4c4"/><rect x="464" y="0" width="1" height="3" fill="#c4c4c4"/><rect x="466" y="0" width="1" height="3" fill="#c4c4c4"/><rect x="469" y="0" width="1" height="3" fill="#c4c4c4"/><rect x="472" y="0" width="1" height="3" fill="#c4c4c4"/><rect x="474" y="0" width="1" height="3" fill="#c4c4c4"/><rect x="477" y="0" width="1" height="3" fill="#c4c4c4"/><rect x="480" y="0" width="1" height="3" fill="#c4c4c4"/><rect x="482" y="0" width="1" height="3" fill="#c4c4c4"/><rect x="485" y="0" width="1" height="3" fill="#c4c4c4"/><rect x="488" y="0" width="1" height="3" fill="#c4c4c4"/><rect x="491" y="0" width="1" height="3" fill="#c4c4c4"/><rect x="493" y="0" width="1" height="3" fill="#c4c4c4"/><rect x="496" y="0" width="1" height="3" fill="#c4c4c4"/><rect x="499" y="0" width="1" height="3" fill="#c4c4c4"/><rect x="501" y="0" width="1" height="3" fill="#c4c4c4"/><rect x="504" y="0" width="1" height="3" fill="#c4c4c4"/><rect x="507" y="0" width="1" height="3" fill="#c4c4c4"/><rect x="509" y="0" width="1" height="3" fill="#c4c4c4"/><rect x="512" y="0" width="1" height="3" fill="#c4c4c4"/><rect x="515" y="0" width="1" height="3" fill="#c4c4c4"/><rect x="518" y="0" width="1" height="3" fill="#c4c4c4"/><rect x="520" y="0" width="1" height="3" fill="#c4c4c4"/><rect x="523" y="0" width="1" height="3" fill="#c4c4c4"/><rect x="526" y="0" width="1" height="3" fill="#c4c4c4"/><rect x="528" y="0" width="1" height="3" fill="#c4c4c4"/><rect x="531" y="0" width="1" height="3" fill="#c4c4c4"/><rect x="534" y="0" width="1" height="3" fill="#c4c4c4"/><rect x="536" y="0" width="1" height="3" fill="#c4c4c4"/><rect x="539" y="0" width="1" height="3" fill="#c4c4c4"/><rect x="542" y="0" width="1" height="3" fill="#c4c4c4"/><rect x="545" y="0" width="1" height="3" fill="#c4c4c4"/><rect x="547" y="0" width="1" height="3" fill="#c4c4c4"/><rect x="550" y="0" width="1" height="3" fill="#c4c4c4"/><rect x="553" y="0" width="1" height="3" fill="#c4c4c4"/><rect x="555" y="0" width="1" height="3" fill="#c4c4c4"/><rect x="558" y="0" width="1" height="3" fill="#c4c4c4"/><rect x="561" y="0" width="1" height="3" fill="#c4c4c4"/><rect x="564" y="0" width="1" height="3" fill="#c4c4c4"/><rect x="566" y="0" width="1" height="3" fill="#c4c4c4"/><rect x="569" y="0" width="1" height="3" fill="#c4c4c4"/><rect x="572" y="0" width="1" height="3" fill="#c4c4c4"/><rect x="574" y="0" width="1" height="3" fill="#c4c4c4"/><rect x="577" y="0" width="1" height="3" fill="#c4c4c4"/><rect x="580" y="0" width="1" height="3" fill="#c4c4c4"/><rect x="582" y="0" width="1" height="3" fill="#c4c4c4"/><rect x="585" y="0" width="1" height="3" fill="#c4c4c4"/><rect x="588" y="0" width="1" height="3" fill="#c4c4c4"/><rect x="591" y="0" width="1" height="3" fill="#c4c4c4"/><rect x="593" y="0" width="1" height="3" fill="#c4c4c4"/><rect x="596" y="0" width="1" height="3" fill="#c4c4c4"/><rect x="599" y="0" width="1" height="3" fill="#c4c4c4"/><rect x="601" y="0" width="1" height="3" fill="#c4c4c4"/><rect x="604" y="0" width="1" height="3" fill="#c4c4c4"/><rect x="607" y="0" width="1" height="3" fill="#c4c4c4"/><rect x="609" y="0" width="1" height="3" fill="#c4c4c4"/><rect x="612" y="0" width="1" height="3" fill="#c4c4c4"/><rect x="615" y="0" width="1" height="3" fill="#c4c4c4"/><rect x="618" y="0" width="1" height="3" fill="#c4c4c4"/><rect x="620" y="0" width="1" height="3" fill="#c4c4c4"/><rect x="623" y="0" width="1" height="3" fill="#c4c4c4"/><rect x="626" y="0" width="1" height="3" fill="#c4c4c4"/><rect x="628" y="0" width="1" height="3" fill="#c4c4c4"/><rect x="631" y="0" width="1" height="3" fill="#c4c4c4"/><rect x="634" y="0" width="1" height="3" fill="#c4c4c4"/><rect x="636" y="0" width="1" height="3" fill="#c4c4c4"/><rect x="639" y="0" width="1" height="3" fill="#c4c4c4"/><rect x="642" y="0" width="1" height="3" fill="#c4c4c4"/><rect x="645" y="0" width="1" height="3" fill="#c4c4c4"/><rect x="647" y="0" width="1" height="3" fill="#c4c4c4"/><rect x="650" y="0" width="1" height="3" fill="#c4c4c4"/><rect x="653" y="0" width="1" height="3" fill="#c4c4c4"/><rect x="655" y="0" width="1" height="3" fill="#c4c4c4"/><rect x="658" y="0" width="1" height="3" fill="#c4c4c4"/><rect x="661" y="0" width="1" height="3" fill="#c4c4c4"/><rect x="663" y="0" width="1" height="3" fill="#c4c4c4"/><rect x="666" y="0" width="1" height="3" fill="#c4c4c4"/><rect x="669" y="0" width="1" height="3" fill="#c4c4c4"/><rect x="672" y="0" width="1" height="3" fill="#c4c4c4"/><rect x="674" y="0" width="1" height="3" fill="#c4c4c4"/><rect x="677" y="0" width="1" height="3" fill="#c4c4c4"/><rect x="680" y="0" width="1" height="3" fill="#c4c4c4"/><rect x="682" y="0" width="1" height="3" fill="#c4c4c4"/><rect x="685" y="0" width="1" height="3" fill="#c4c4c4"/><rect x="688" y="0" width="1" height="3" fill="#c4c4c4"/><rect x="690" y="0" width="1" height="3" fill="#c4c4c4"/></svg>
<div class="abs" style="left:1px;top:659px;width:803px;height:1px;background:#fff"></div>
<div class="abs" style="left:2px;top:660px;font-size:11px;letter-spacing:-0.2px;line-height:14px;white-space:nowrap">x 0.000 y 26.219 z 0.669</div>
<div class="tb" style="left:704px;top:620px"><svg width="16" height="16" viewBox="0 0 16 16"><rect x="4" y="4" width="1" height="10" fill="#8a8a8a" shape-rendering="crispEdges"/><rect x="6" y="4" width="1" height="10" fill="#8a8a8a" shape-rendering="crispEdges"/><path d="M12 6.2 L8.3 9.6 L12 13" fill="none" stroke="#8a8a8a" stroke-width="1"/></svg></div><div class="tb" style="left:724px;top:620px"><svg width="16" height="16" viewBox="0 0 16 16"><rect x="5" y="4" width="1" height="10" fill="#8a8a8a" shape-rendering="crispEdges"/><path d="M11.3 6.2 L7.6 9.6 L11.3 13" fill="none" stroke="#8a8a8a" stroke-width="1"/></svg></div><div class="tb" style="left:744px;top:620px"><svg width="16" height="16" viewBox="0 0 16 16"><path d="M6.7 6.2 L3.0 9.6 L6.7 13" fill="none" stroke="#8a8a8a" stroke-width="1"/><path d="M12.7 6.2 L9.0 9.6 L12.7 13" fill="none" stroke="#8a8a8a" stroke-width="1"/></svg></div><div class="tb" style="left:764px;top:620px"><svg width="16" height="16" viewBox="0 0 16 16"><path d="M9.6 6.2 L5.8999999999999995 9.6 L9.6 13" fill="none" stroke="#8a8a8a" stroke-width="1"/></svg></div><div class="tb" style="left:784px;top:620px"><svg width="16" height="16" viewBox="0 0 16 16"><path d="M5.6 6.2 L9.3 9.6 L5.6 13" fill="none" stroke="#8a8a8a" stroke-width="1"/></svg></div><div class="tb" style="left:804px;top:620px"><svg width="16" height="16" viewBox="0 0 16 16"><path d="M3 6.2 L6.7 9.6 L3 13" fill="none" stroke="#8a8a8a" stroke-width="1"/><path d="M8.6 6.2 L12.3 9.6 L8.6 13" fill="none" stroke="#8a8a8a" stroke-width="1"/></svg></div><div class="tb" style="left:824px;top:620px"><svg width="16" height="16" viewBox="0 0 16 16"><path d="M4.6 6.2 L8.3 9.6 L4.6 13" fill="none" stroke="#8a8a8a" stroke-width="1"/><rect x="11" y="4" width="1" height="10" fill="#8a8a8a" shape-rendering="crispEdges"/></svg></div><div class="tb" style="left:844px;top:620px"><svg width="16" height="16" viewBox="0 0 16 16"><path d="M4 6.2 L7.7 9.6 L4 13" fill="none" stroke="#8a8a8a" stroke-width="1"/><rect x="10" y="4" width="1" height="10" fill="#8a8a8a" shape-rendering="crispEdges"/><rect x="12" y="4" width="1" height="10" fill="#8a8a8a" shape-rendering="crispEdges"/></svg></div><div class="fld" style="left:703px;top:639px"><span><i>0</i></span></div><div class="fld" style="left:743px;top:639px"><span><i></i></span></div><div class="fld" style="left:783px;top:639px"><span><i>251</i></span></div><div class="fld" style="left:823px;top:639px"><span><i>251</i></span></div>
<div class="btn" style="left:864px;top:620px;width:36px;height:36px;line-height:35px"><span class="x">Anim</span></div>
<div class="abs" style="left:710px;top:665px;width:88px;height:4px;box-sizing:border-box;border:1px solid #d6d6d6;background:#e7e7e7"></div>
<svg class="abs" style="left:751px;top:662px" width="7" height="12" viewBox="0 0 7 12"><path d="M0 0 H7 V8.500 L3.500 12 L0 8.500 Z" fill="#0078d7"/></svg>
<div class="abs" style="left:713px;top:676px;width:1px;height:4px;background:#c4c4c4"></div><div class="abs" style="left:794px;top:676px;width:1px;height:4px;background:#c4c4c4"></div>
<div class="abs" style="left:804px;top:660px;width:100px;height:19px;box-sizing:border-box;border-top:1px solid #a0a0a0;border-left:1px solid #a0a0a0;background:#e4e4e4"></div>
</div>
</body></html>
